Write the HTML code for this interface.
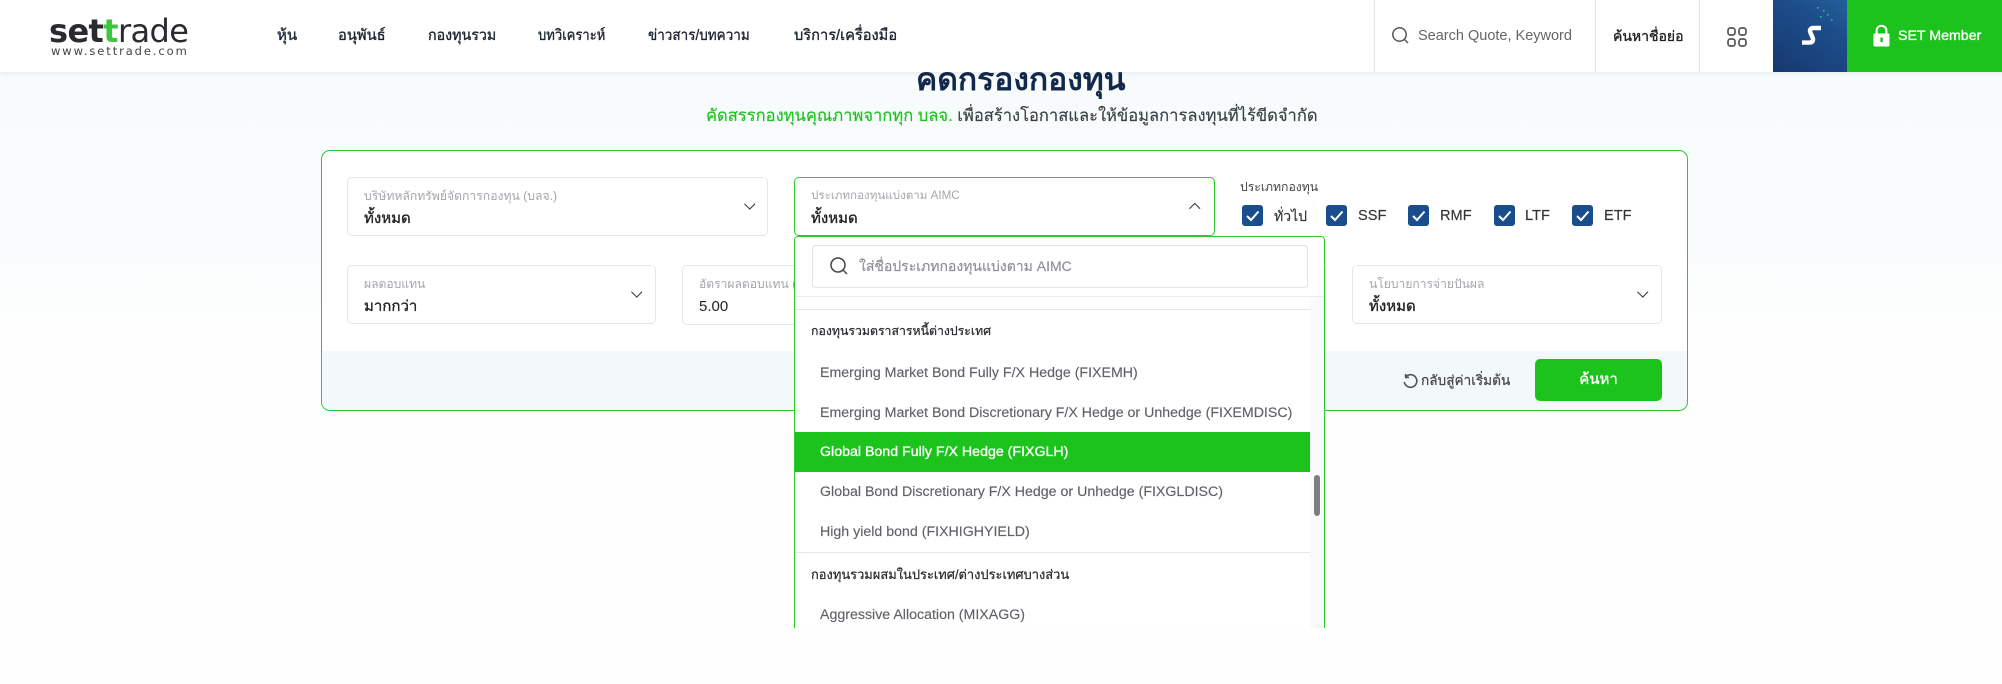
<!DOCTYPE html>
<html lang="th">
<head>
<meta charset="utf-8">
<title>คัดกรองกองทุน</title>
<style>
*{box-sizing:border-box}
html,body{margin:0;padding:0}
body{width:2002px;height:684px;overflow:hidden;position:relative;background:#fefefe;font-family:"Liberation Sans","Noto Sans CJK JP",sans-serif;color:#2c2c2c}
.a{position:absolute}
.t{position:absolute;white-space:nowrap;line-height:20px;height:20px}
.bg{left:0;top:72px;width:2002px;height:262px;background:linear-gradient(#f7fbfc 0,#f8fcfd 60%,#fbfdfd 85%,#fefefe 100%)}
.hdr{left:0;top:0;width:2002px;height:72px;background:#fff;box-shadow:0 1px 5px rgba(30,60,60,.09);z-index:5}
.sep{top:0;width:1px;height:72px;background:#e3e6e6}
.nav{font-size:15px;color:#1b2430;top:26px;-webkit-text-stroke:.35px currentColor;transform-origin:left center}
.panel{left:321px;top:150px;width:1367px;height:261px;background:#fff;border:1.5px solid #2cc82c;border-radius:9px;overflow:hidden}
.foot{left:0;top:200px;width:100%;height:60px;background:#f3f8fa}
.f{position:absolute;background:#fff;border:1px solid #e2e8e9;border-radius:5px}
.lb{font-size:12.1px;color:#a2a7aa}
.val{font-size:15px;color:#222;-webkit-text-stroke:.35px currentColor}
.chev{position:absolute;width:7.5px;height:7.5px;border-right:1.5px solid #333;border-bottom:1.5px solid #333;transform:rotate(45deg)}
.cb{position:absolute;top:205px;width:21px;height:21px;background:#1a4d8c;border-radius:3px}
.cb svg{position:absolute;left:0;top:0}
.cl{font-size:14.6px;color:#333;top:206px;-webkit-text-stroke:.15px currentColor}
.dd{left:794px;top:236px;width:531px;height:392px;background:#fff;border:1.5px solid #2cc82c;border-bottom:0;border-radius:4px 4px 0 0;overflow:hidden;z-index:3}
.it{font-size:14.2px;color:#5f6367;-webkit-text-stroke:.15px currentColor}
.gp{font-size:12.6px;color:#25282b;-webkit-text-stroke:.2px currentColor}
</style>
</head>
<body>
<div class="a bg"></div>

<div class="t" style="left:916px;top:64px;height:30px;line-height:30px;font-size:31.8px;font-weight:700;color:#13294b">คัดกรองกองทุน</div>
<div class="t" style="left:706px;top:106px;font-size:16.55px;color:#3a3f45;-webkit-text-stroke:.15px currentColor"><span style="color:#1cc31c">คัดสรรกองทุนคุณภาพจากทุก บลจ.</span> เพื่อสร้างโอกาสและให้ข้อมูลการลงทุนที่ไร้ขีดจำกัด</div>

<div class="a hdr">
  <div class="t" style="left:49px;top:13px;height:36px;line-height:36px;font-family:'DejaVu Sans',sans-serif;font-size:32px;color:#2b2b2f;letter-spacing:-.6px"><b>set</b><b style="color:#3fc63f">t</b>rade</div>
  <div class="t" style="left:51px;top:43px;font-size:11.5px;line-height:16px;height:16px;letter-spacing:1.9px;color:#444;font-family:'DejaVu Sans',sans-serif">www.settrade.com</div>
  <div class="t nav" style="left:277px">หุ้น</div>
  <div class="t nav" style="left:338px;transform:scaleX(.98)">อนุพันธ์</div>
  <div class="t nav" style="left:428px;transform:scaleX(.95)">กองทุนรวม</div>
  <div class="t nav" style="left:538px;transform:scaleX(.87)">บทวิเคราะห์</div>
  <div class="t nav" style="left:648px;transform:scaleX(.9)">ข่าวสาร/บทความ</div>
  <div class="t nav" style="left:794px;transform:scaleX(.975)">บริการ/เครื่องมือ</div>
  <div class="a sep" style="left:1374px"></div>
  <div class="a sep" style="left:1595px"></div>
  <div class="a sep" style="left:1699px"></div>
  <svg class="a" style="left:1391px;top:26px" width="19" height="19" viewBox="0 0 19 19" fill="none" stroke="#555" stroke-width="1.5"><circle cx="8.5" cy="8.5" r="6.7"/><path d="M13.5 13.5L17 17"/></svg>
  <div class="t" style="left:1418px;top:26px;font-size:14.5px;color:#666">Search Quote, Keyword</div>
  <div class="t" style="left:1613px;top:26px;font-size:14px;color:#222;-webkit-text-stroke:.35px currentColor">ค้นหาชื่อย่อ</div>
  <svg class="a" style="left:1727px;top:27px" width="20" height="20" viewBox="0 0 20 20" fill="none" stroke="#555" stroke-width="1.7"><rect x="1" y="1" width="7" height="7" rx="2.4"/><rect x="12" y="1" width="7" height="7" rx="2.4"/><rect x="1" y="12" width="7" height="7" rx="2.4"/><rect x="12" y="12" width="7" height="7" rx="2.4"/></svg>
  <div class="a" style="left:1773px;top:0;width:74px;height:72px;background:linear-gradient(35deg,#17386f 0,#1d4f8c 70%,#23619a 100%)"></div>
  <svg class="a" style="left:1773px;top:0" width="74" height="72" viewBox="0 0 74 72" fill="#2bd07a"><rect x="44" y="7" width="1.5" height="1.5"/><rect x="50" y="10" width="1.5" height="1.5"/><rect x="54" y="14" width="1.5" height="1.5"/><rect x="47" y="16" width="1.5" height="1.5"/><rect x="58" y="19" width="1.5" height="1.5"/></svg>
  <svg class="a" style="left:1800px;top:24px" width="23" height="23" viewBox="0 0 23 23" fill="none" stroke="#fff" stroke-width="4.4"><path d="M21 4H13.5C10.3 4 9.4 6 10.4 8.5L12.6 13.6C13.7 16.4 12.6 18.6 9.6 18.6H2"/></svg>
  <div class="a" style="left:1847px;top:0;width:155px;height:72px;background:#1bc31c"></div>
  <svg class="a" style="left:1873px;top:24px" width="17" height="23" viewBox="0 0 17 23"><path d="M3.6 10V6.6a4.9 4.9 0 0 1 9.8 0V10" fill="none" stroke="#fff" stroke-width="2"/><rect x="0.5" y="9.5" width="16" height="13" rx="1.2" fill="#fff"/><rect x="7.4" y="13.5" width="2.4" height="4.5" fill="#1bc31c"/></svg>
  <div class="t" style="left:1898px;top:26px;font-size:14.2px;color:#fff;-webkit-text-stroke:.35px currentColor">SET Member</div>
</div>

<div class="a panel"><div class="a foot"></div></div>

<div class="f" style="left:347px;top:177px;width:421px;height:59px"></div>
<div class="t lb" style="left:364px;top:186px;font-size:12.2px">บริษัทหลักทรัพย์จัดการกองทุน (บลจ.)</div>
<div class="t val" style="left:364px;top:209px">ทั้งหมด</div>
<div class="chev" style="left:745.5px;top:200px"></div>

<div class="f" style="left:794px;top:177px;width:421px;height:59px;border:1.5px solid #2cc82c"></div>
<div class="t lb" style="left:811px;top:186px;font-size:11.6px">ประเภทกองทุนแบ่งตาม AIMC</div>
<div class="t val" style="left:811px;top:209px">ทั้งหมด</div>
<div class="chev" style="left:1191px;top:205px;transform:rotate(225deg)"></div>

<div class="t" style="left:1240px;top:177px;font-size:12.2px;color:#444">ประเภทกองทุน</div>
<div class="cb" style="left:1242px"><svg width="21" height="21" viewBox="0 0 21 21" fill="none" stroke="#fff" stroke-width="2"><path d="M5 11l4 4 7.5-8.5"/></svg></div>
<div class="t cl" style="left:1274px;font-size:14px">ทั่วไป</div>
<div class="cb" style="left:1326px"><svg width="21" height="21" viewBox="0 0 21 21" fill="none" stroke="#fff" stroke-width="2"><path d="M5 11l4 4 7.5-8.5"/></svg></div>
<div class="t cl" style="left:1358px">SSF</div>
<div class="cb" style="left:1408px"><svg width="21" height="21" viewBox="0 0 21 21" fill="none" stroke="#fff" stroke-width="2"><path d="M5 11l4 4 7.5-8.5"/></svg></div>
<div class="t cl" style="left:1440px">RMF</div>
<div class="cb" style="left:1494px"><svg width="21" height="21" viewBox="0 0 21 21" fill="none" stroke="#fff" stroke-width="2"><path d="M5 11l4 4 7.5-8.5"/></svg></div>
<div class="t cl" style="left:1525px">LTF</div>
<div class="cb" style="left:1572px"><svg width="21" height="21" viewBox="0 0 21 21" fill="none" stroke="#fff" stroke-width="2"><path d="M5 11l4 4 7.5-8.5"/></svg></div>
<div class="t cl" style="left:1604px">ETF</div>

<div class="f" style="left:347px;top:265px;width:309px;height:59px"></div>
<div class="t lb" style="left:364px;top:274px">ผลตอบแทน</div>
<div class="t val" style="left:364px;top:297px">มากกว่า</div>
<div class="chev" style="left:633px;top:288px"></div>

<div class="f" style="left:682px;top:265px;width:309px;height:60px"></div>
<div class="t lb" style="left:699px;top:274px">อัตราผลตอบแทน (%)</div>
<div class="t" style="left:699px;top:297px;font-size:15px;color:#222">5.00</div>

<div class="f" style="left:1017px;top:265px;width:309px;height:59px"></div>

<div class="f" style="left:1352px;top:265px;width:310px;height:59px"></div>
<div class="t lb" style="left:1369px;top:274px">นโยบายการจ่ายปันผล</div>
<div class="t val" style="left:1369px;top:297px">ทั้งหมด</div>
<div class="chev" style="left:1639px;top:288px"></div>

<svg class="a" style="left:1402px;top:373px" width="17" height="17" viewBox="0 0 17 17" fill="none" stroke="#555" stroke-width="1.6"><path d="M4 3.6A6.3 6.3 0 1 1 2.3 9"/><path d="M3.6 1v3.4H7"/></svg>
<div class="t" style="left:1421px;top:371px;font-size:13.6px;color:#444;-webkit-text-stroke:.2px currentColor">กลับสู่ค่าเริ่มต้น</div>
<div class="a" style="left:1535px;top:359px;width:127px;height:42px;background:#1bc31c;border-radius:5px;color:#fff;font-size:15px;line-height:42px;text-align:center;-webkit-text-stroke:.35px currentColor">ค้นหา</div>

<div class="a dd">
  <div class="a" style="left:-1px;top:0;width:531px;height:60px;background:#fff;border-bottom:1px solid #e8eeee;z-index:2"></div>
  <div class="a" style="left:17px;top:8px;width:496px;height:43px;border:1px solid #e0e5e6;border-radius:4px;z-index:3"></div>
  <svg class="a" style="left:34px;top:19px;z-index:3" width="20" height="20" viewBox="0 0 20 20" fill="none" stroke="#444" stroke-width="1.5"><circle cx="9" cy="9" r="7"/><path d="M14 14l4 4"/></svg>
  <div class="t" style="left:64px;top:19px;font-size:14px;color:#8b9095;z-index:3;-webkit-text-stroke:.15px currentColor">ใส่ชื่อประเภทกองทุนแบ่งตาม AIMC</div>
  <div class="a" style="left:515px;top:60px;width:15px;height:332px;background:#f9fbfb"></div>
  <div class="a" style="left:519px;top:238px;width:6px;height:41px;background:#7c7f82;border-radius:3px"></div>
  <div class="a" style="left:0;top:72px;width:515px;height:1px;background:#e3e8ec"></div>
  <div class="t gp" style="left:16px;top:84px;font-size:12.3px">กองทุนรวมตราสารหนี้ต่างประเทศ</div>
  <div class="t it" style="left:25px;top:126px">Emerging Market Bond Fully F/X Hedge (FIXEMH)</div>
  <div class="t it" style="left:25px;top:166px">Emerging Market Bond Discretionary F/X Hedge or Unhedge (FIXEMDISC)</div>
  <div class="a" style="left:0;top:195px;width:515px;height:40px;background:#1bc31c"></div>
  <div class="t it" style="left:25px;top:205px;color:#fff;-webkit-text-stroke:.35px currentColor">Global Bond Fully F/X Hedge (FIXGLH)</div>
  <div class="t it" style="left:25px;top:245px">Global Bond Discretionary F/X Hedge or Unhedge (FIXGLDISC)</div>
  <div class="t it" style="left:25px;top:285px">High yield bond (FIXHIGHYIELD)</div>
  <div class="a" style="left:0;top:315px;width:515px;height:1px;background:#e3e8ec"></div>
  <div class="t gp" style="left:16px;top:328px;font-size:12.9px">กองทุนรวมผสมในประเทศ/ต่างประเทศบางส่วน</div>
  <div class="t it" style="left:25px;top:368px">Aggressive Allocation (MIXAGG)</div>
</div>
</body>
</html>
